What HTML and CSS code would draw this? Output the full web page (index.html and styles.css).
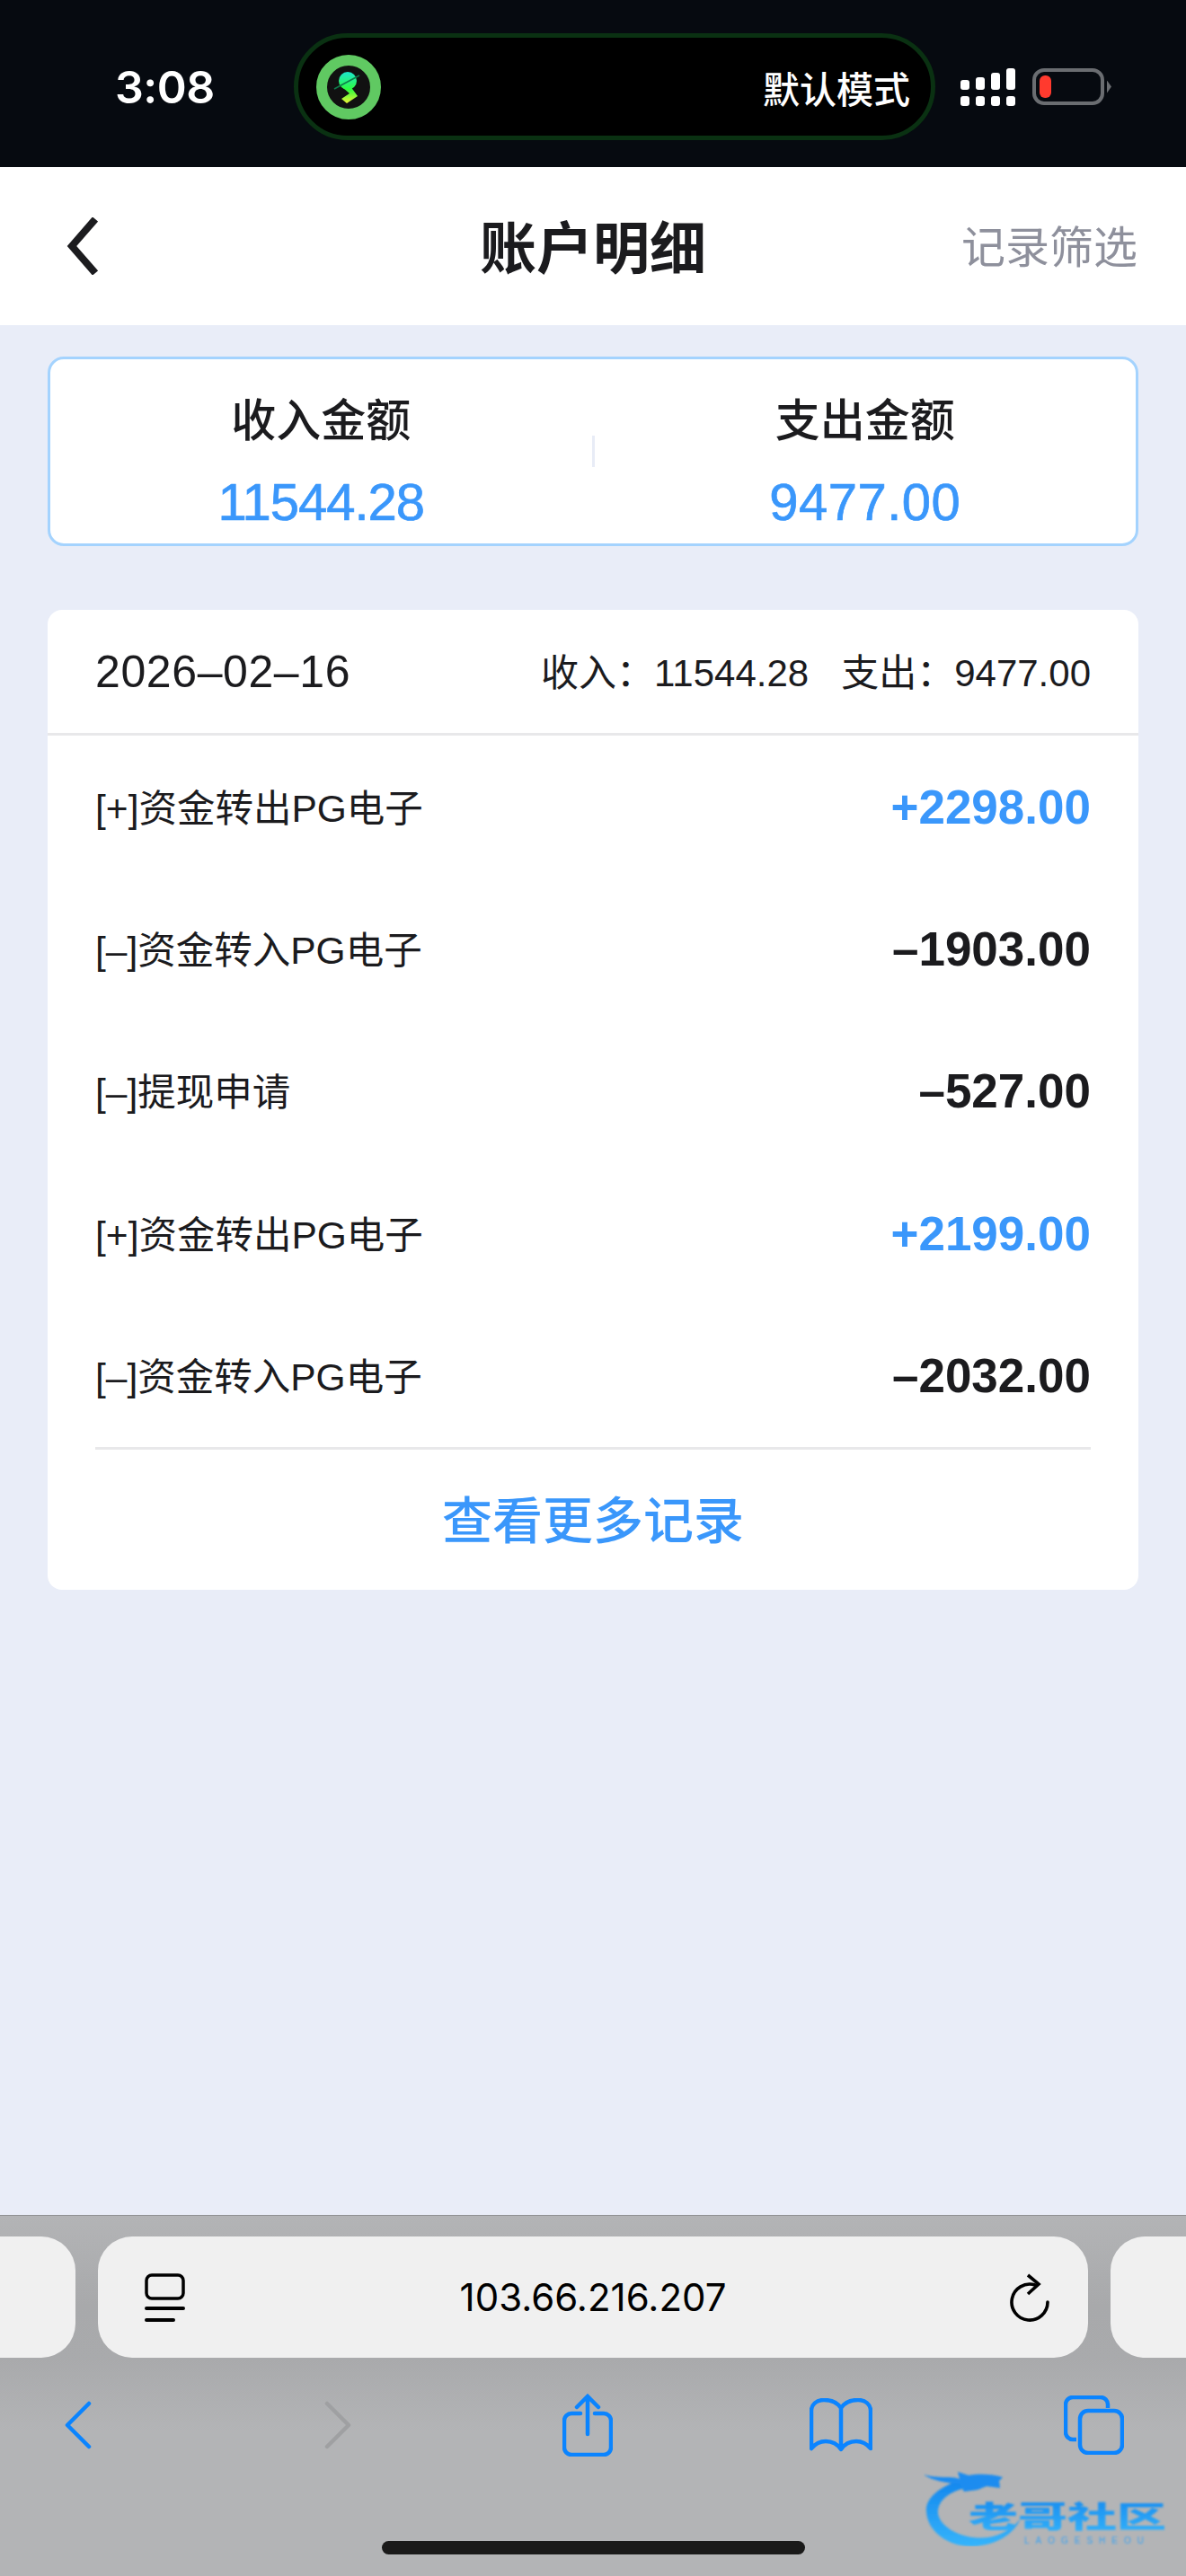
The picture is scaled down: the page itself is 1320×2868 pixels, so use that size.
FILE: index.html

```html
<!DOCTYPE html>
<html lang="zh">
<head>
  <meta charset="utf-8">
  <title>账户明细</title>
  <link rel="stylesheet" href="styles.css">
</head>
<body>
  <div class="screen">
    <div class="status-bar">
      <span class="clock">3:08</span>
      <div class="island">
        <svg class="island-icon" viewBox="0 0 72 72">
          <defs>
            <linearGradient id="bolt" gradientUnits="userSpaceOnUse" x1="0" y1="20" x2="0" y2="54">
              <stop offset="0" stop-color="#1de8c8"/>
              <stop offset="0.55" stop-color="#2efb3c"/>
              <stop offset="1" stop-color="#eef536"/>
            </linearGradient>
          </defs>
          <circle cx="36" cy="36" r="30" fill="#111" stroke="#60c962" stroke-width="12"/>
          <circle cx="35" cy="29" r="10" fill="url(#bolt)"/>
          <polygon points="30,37 38,35 46,46 34,54 28,49 37,43" fill="url(#bolt)"/>
          <path d="M48 23L20 38" stroke="#0f7a4a" stroke-width="1.5"/>
        </svg>
        <span class="island-text">默认模式</span>
      </div>
      <div class="signal">
        <span class="sig sig-1"><i></i><i></i></span>
        <span class="sig sig-2"><i></i><i></i></span>
        <span class="sig sig-3"><i></i><i></i></span>
        <span class="sig sig-4"><i></i><i></i></span>
      </div>
      <div class="battery"><span class="battery-level"></span></div>
      <span class="battery-nub"></span>
    </div>

    <div class="nav">
      <svg class="nav-back" viewBox="0 0 35 64">
        <path d="M32 2L6 32l26 30" fill="none" stroke="#1c1c1f" stroke-width="8"/>
      </svg>
      <h1 class="nav-title">账户明细</h1>
      <a class="nav-filter">记录筛选</a>
    </div>

    <div class="main">
      <div class="summary">
        <div class="summary-col">
          <div class="summary-label">收入金额</div>
          <div class="summary-value">11544.28</div>
        </div>
        <span class="summary-line"></span>
        <div class="summary-col">
          <div class="summary-label">支出金额</div>
          <div class="summary-value summary-value-out">9477.00</div>
        </div>
      </div>

      <div class="records">
        <div class="records-head">
          <span class="records-date">2026–02–16</span>
          <span class="records-total">
            <span class="total-item">收入：11544.28</span>
            <span class="total-item">支出：9477.00</span>
          </span>
        </div>
        <div class="rows">
          <div class="row"><span class="row-name">[+]资金转出PG电子</span><span class="row-amount blue">+2298.00</span></div>
          <div class="row"><span class="row-name">[–]资金转入PG电子</span><span class="row-amount">–1903.00</span></div>
          <div class="row"><span class="row-name">[–]提现申请</span><span class="row-amount">–527.00</span></div>
          <div class="row"><span class="row-name">[+]资金转出PG电子</span><span class="row-amount blue">+2199.00</span></div>
          <div class="row"><span class="row-name">[–]资金转入PG电子</span><span class="row-amount">–2032.00</span></div>
        </div>
        <div class="records-more">查看更多记录</div>
      </div>
    </div>

    <div class="toolbar">
      <div class="url-row">
        <div class="url-side url-left"></div>
        <div class="url-pill">
          <svg class="url-tabs" viewBox="0 0 45 54">
            <rect x="2" y="2" width="41" height="26" rx="6" fill="none" stroke="#000" stroke-width="3.5"/>
            <path d="M2 39h41M2 52h30" stroke="#000" stroke-width="4" stroke-linecap="round"/>
          </svg>
          <span class="url-text">103.66.216.207</span>
          <svg class="url-reload" viewBox="0 0 44 54">
            <path d="M42 32A20 20 0 1 1 28 13" fill="none" stroke="#000" stroke-width="3.6" stroke-linecap="round"/>
            <path d="M20 2l12 10-12 11" fill="none" stroke="#000" stroke-width="3.6"/>
          </svg>
        </div>
        <div class="url-side url-right"></div>
      </div>

      <div class="tools">
        <svg class="tool-arrow" viewBox="0 0 30 54"><path d="M27 3L3 27l24 24" class="tool-line" stroke-linecap="round" stroke-linejoin="round"/></svg>
        <svg class="tool-arrow" viewBox="0 0 30 54"><path d="M3 3l24 24L3 51" class="tool-line tool-off" stroke-linecap="round" stroke-linejoin="round"/></svg>
        <svg class="tool-share" viewBox="0 0 56 70">
          <path class="tool-line" d="M20 22H10a8 8 0 0 0-8 8v30a8 8 0 0 0 8 8h36a8 8 0 0 0 8-8V30a8 8 0 0 0-8-8H36M28 45V3M16 15L28 3l12 12" stroke-linecap="round"/>
        </svg>
        <svg class="tool-book" viewBox="0 0 70 60">
          <path class="tool-line" d="M2 56V14C2 7 8 2 16 2c8 0 15 3 19 9 4-6 11-9 19-9 8 0 14 5 14 12v42c-5-6-10-8-16-8-7 0-13 3-17 9-4-6-10-9-17-9-6 0-11 2-16 8zM35 11v46" stroke-linejoin="round"/>
        </svg>
        <svg class="tool-copies" viewBox="0 0 67 66">
          <path class="tool-line" d="M14 49h-4a8 8 0 0 1-8-8V10a8 8 0 0 1 8-8h31a8 8 0 0 1 8 8v4"/>
          <rect class="tool-line" x="18" y="17" width="47" height="47" rx="9"/>
        </svg>
      </div>
      <div class="home-bar"></div>

      <svg class="watermark" viewBox="0 0 270 87">
        <defs>
          <linearGradient id="mark" x1="0" y1="0" x2="0" y2="1">
            <stop offset="0" stop-color="#1487ee"/>
            <stop offset="1" stop-color="#35b4fb"/>
          </linearGradient>
          <filter id="soft"><feGaussianBlur stdDeviation="0.8"/></filter>
        </defs>
        <g filter="url(#soft)">
          <path fill="url(#mark)" d="M38 14C10 24 2 38 3 48c1 24 27 40 52 39 25-1 45-13 53-31-13 16-33 24-53 21C32 74 14 60 16 46c2-12 14-20 30-24z"/>
          <path fill="#1a8cf0" d="M0 7c15 5 30 1 40 5L38 4l12 4c10-2 25-2 38 2l-4 4 1 8-15-2-10 4-15 2-5-8C25 16 10 14 0 7z"/>
          <text class="mark-title" x="50" y="66" textLength="220" lengthAdjust="spacingAndGlyphs" fill="url(#mark)">老哥社区</text>
          <text class="mark-sub" x="112" y="84" textLength="133" fill="#3aa2f2">LAOGESHEOU</text>
        </g>
      </svg>
    </div>
  </div>
</body>
</html>
```

FILE: styles.css

```css
* {
  box-sizing: border-box;
}

body {
  margin: 0;
  font-family: "Liberation Sans", "Noto Sans CJK SC", sans-serif;
  color: #1b1b1e;
}

.screen {
  position: relative;
  width: 1320px;
  height: 2868px;
  display: flex;
  flex-direction: column;
  background-color: #e9edf8;
  overflow: hidden;
}

/* status bar */
.status-bar {
  height: 186px;
  flex: none;
  display: flex;
  align-items: center;
  padding: 7px 0 0 128px;
  background-color: #060a10;
  color: #fff;
}

.clock {
  width: 199px;
  font-family: Inter, sans-serif;
  font-size: 50px;
  font-weight: 600;
  letter-spacing: -0.5px;
}

.island {
  width: 714px;
  height: 119px;
  margin-right: 28px;
  display: flex;
  align-items: center;
  justify-content: space-between;
  padding: 0 23px 0 20px;
  background-color: #000;
  border: 5px solid #0a3112;
  border-radius: 60px;
}

.island-icon {
  width: 72px;
  height: 72px;
}

.island-text {
  font-family: "Noto Sans CJK SC", sans-serif;
  font-size: 41px;
  font-weight: 500;
}

.signal {
  display: flex;
  gap: 7px;
  height: 42px;
  margin-right: 19px;
}

.sig {
  width: 10px;
  display: flex;
  flex-direction: column;
  justify-content: flex-end;
  gap: 7px;
}

.sig i {
  display: block;
  background-color: #fff;
  border-radius: 3px;
  height: 11px;
}

.sig-2 i:first-child { height: 14px; }
.sig-3 i:first-child { height: 19px; }
.sig-4 i:first-child { height: 25px; }

.battery {
  width: 80px;
  height: 41px;
  padding: 4px;
  border: 4px solid #6a6d71;
  border-radius: 13px;
}

.battery-level {
  display: block;
  width: 13px;
  height: 25px;
  background-color: #ff3a2e;
  border-radius: 6px;
}

.battery-nub {
  width: 5px;
  height: 14px;
  margin-left: 3px;
  background-color: #6a6d71;
  clip-path: polygon(0 0, 100% 50%, 0 100%);
}

/* header */
.nav {
  height: 176px;
  flex: none;
  display: grid;
  grid-template-columns: 1fr auto 1fr;
  align-items: center;
  padding: 0 54px;
  background-color: #fff;
}

.nav-back {
  width: 35px;
  height: 64px;
  margin-left: 20px;
}

.nav-title {
  margin: 0 0 6px;
  font-size: 63px;
  font-weight: 700;
}

.nav-filter {
  justify-self: end;
  margin-bottom: 6px;
  font-size: 49px;
  color: #8e909c;
}

/* content */
.main {
  flex: 1;
  padding: 35px 53px 0;
}

.summary {
  height: 211px;
  display: flex;
  align-items: center;
  background-color: #fff;
  border: 3px solid #a4d3fe;
  border-radius: 18px;
}

.summary-col {
  flex: 1;
  padding-top: 22px;
  text-align: center;
}

.summary-label {
  font-size: 50px;
  font-weight: 500;
  line-height: 60px;
}

.summary-value {
  margin-top: 30px;
  font-size: 58px;
  line-height: 60px;
  letter-spacing: -1px;
  color: #3a97fb;
  -webkit-text-stroke: 0.7px #3a97fb;
}

.summary-value-out {
  letter-spacing: 0.5px;
}

.summary-line {
  width: 3px;
  height: 35px;
  background-color: #e8ecf6;
}

.records {
  margin-top: 71px;
  height: 1091px;
  background-color: #fff;
  border-radius: 16px;
}

.records-head {
  height: 140px;
  display: flex;
  align-items: center;
  justify-content: space-between;
  padding: 0 53px;
  border-bottom: 3px solid #e8e8ea;
}

.records-date {
  font-size: 50px;
  letter-spacing: 0.6px;
}

.records-total {
  display: flex;
  gap: 36px;
  margin-bottom: 5px;
  font-size: 42px;
}

.row {
  height: 158.4px;
  display: flex;
  align-items: center;
  justify-content: space-between;
  padding: 0 53px;
}

.row-name {
  margin-bottom: 4px;
  font-size: 42.5px;
}

.row-amount {
  font-size: 53px;
  font-weight: 700;
}

.blue {
  color: #3a97fb;
}

.records-more {
  height: 159px;
  margin: 0 53px;
  padding-bottom: 6px;
  display: flex;
  align-items: center;
  justify-content: center;
  border-top: 3px solid #e8e8ea;
  font-size: 56px;
  font-weight: 500;
  color: #3a97fb;
}

/* browser toolbar */
.toolbar {
  height: 402px;
  flex: none;
  padding-top: 23px;
  background: linear-gradient(#b3b4b6 0, #a8a9ab 100px, #a9aaac 160px, #b3b4b6 240px);
  border-top: 1px solid #8f9092;
}

.url-row {
  display: flex;
  gap: 25px;
  height: 135px;
}

.url-side {
  width: 84px;
  background-color: #f0f0f0;
}

.url-left {
  border-radius: 0 38px 38px 0;
}

.url-right {
  border-radius: 38px 0 0 38px;
}

.url-pill {
  width: 1102px;
  display: flex;
  align-items: center;
  justify-content: space-between;
  padding: 0 43px 0 52px;
  background-color: #f0f0f0;
  border-radius: 38px;
}

.url-tabs {
  width: 45px;
  height: 54px;
}

.url-text {
  margin-right: 10px;
  font-family: Inter, sans-serif;
  font-size: 42px;
  color: #000;
}

.url-reload {
  width: 44px;
  height: 54px;
}

.tools {
  height: 150px;
  display: grid;
  grid-template-columns: 289px 265px 275px 283px 1fr;
  align-items: center;
  padding-left: 72px;
}

.tool-line {
  fill: none;
  stroke: #0a84ff;
  stroke-width: 4.5;
}

.tool-off {
  stroke: #9fa0a2;
}

.tool-arrow {
  width: 30px;
  height: 54px;
}

.tool-share {
  width: 56px;
  height: 70px;
}

.tool-book {
  width: 70px;
  height: 60px;
}

.tool-copies {
  width: 67px;
  height: 66px;
}

.home-bar {
  width: 471px;
  height: 15px;
  margin: 54px auto 0;
  background-color: #1a1a1a;
  border-radius: 8px;
}

.watermark {
  position: absolute;
  left: 1028px;
  top: 2748px;
  width: 270px;
  height: 87px;
}

.mark-title {
  font-family: "Noto Sans CJK SC", sans-serif;
  font-size: 33px;
  font-weight: 900;
}

.mark-sub {
  font-family: "Liberation Sans", sans-serif;
  font-size: 10px;
}
```
